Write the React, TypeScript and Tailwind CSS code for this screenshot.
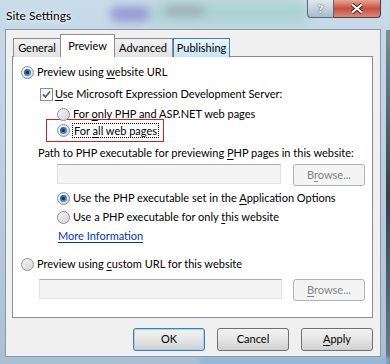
import React from "react";

const font = { fontFamily: 'Lato, "Liberation Sans", Arial, sans-serif' };

function Radio({ checked }: { checked?: boolean }) {
  return (
    <span className="flex h-[13px] w-[13px] shrink-0 items-center justify-center rounded-full border border-[#8e8f8f] bg-gradient-to-br from-[#f6f6f6] to-[#d4d4d4]">
      {checked && (
        <span className="flex h-[7px] w-[7px] items-center justify-center rounded-full bg-gradient-to-br from-[#1b4d7e] to-[#62a8dc]">
          <span className="h-[3px] w-[3px] rounded-full bg-[#0d2f55]" />
        </span>
      )}
    </span>
  );
}

function Check() {
  return (
    <span className="flex h-[13px] w-[13px] shrink-0 items-center justify-center border border-[#8e8f8f] bg-gradient-to-br from-[#f2f2f2] to-[#ffffff]">
      <svg width="9" height="9" viewBox="0 0 9 9">
        <path d="M1 4.5 L3.5 7 L8 1.5" fill="none" stroke="#4a5f97" strokeWidth="1.8" />
      </svg>
    </span>
  );
}

function U({ children }: { children: React.ReactNode }) {
  return <span className="underline underline-offset-2">{children}</span>;
}

function Browse({ accel }: { accel: "B" | "r" }) {
  return (
    <div className="flex h-[22px] w-[72px] shrink-0 items-center justify-center rounded-[3px] border border-[#adb2b5] bg-[#f4f4f4] text-[#838383]">
      {accel === "B" ? (
        <span>
          <U>B</U>rowse...
        </span>
      ) : (
        <span>
          B<U>r</U>owse...
        </span>
      )}
    </div>
  );
}

function Field({ width }: { width: string }) {
  return (
    <div
      className={`h-[20px] ${width} shrink-0 border border-[#e2e3ea] border-t-[#abadb3] bg-[#f4f4f4]`}
    />
  );
}

function DlgButton({ children, focus }: { children: React.ReactNode; focus?: boolean }) {
  return (
    <div
      className={`flex h-[23px] w-[72px] items-center justify-center rounded-[3px] border ${
        focus ? "border-[#3c7fb1] shadow-[inset_0_0_0_1px_#9fd4f5]" : "border-[#707070]"
      } bg-gradient-to-b from-[#f2f2f2] via-[#e6e6e6] to-[#d0d0d0] text-black`}
    >
      {children}
    </div>
  );
}

export default function App() {
  return (
    <div
      className="relative h-[364px] w-[390px] overflow-hidden whitespace-nowrap bg-gradient-to-b from-[#c7dbe8] via-[#b9cfe0] to-[#a9bfd3] text-[11px] text-black"
      style={font}
    >
      {/* blurred glass behind the frame */}
      <div className="absolute left-[150px] top-[2px] h-[22px] w-[160px] rounded-full bg-[#9fd0c8] opacity-70 blur-[6px]" />
      <div className="absolute left-[110px] top-[6px] h-[16px] w-[40px] rounded-full bg-[#8e8fd2] opacity-80 blur-[4px]" />
      <div className="absolute left-[165px] top-[6px] h-[10px] w-[40px] rounded-full bg-[#9b9fa8] opacity-70 blur-[4px]" />
      <div className="absolute right-0 top-[30px] h-[334px] w-[4px] bg-gradient-to-b from-[#7c8c98] via-[#3a4048] to-[#6d7d8c]" />
      <div className="absolute bottom-0 left-[200px] h-[6px] w-[190px] bg-[#8fb6d6] blur-[2px]" />

      {/* title bar */}
      <div className="relative flex h-[29px] items-start">
        <div className="pl-[6px] pt-[7px] text-[12px] text-black [text-shadow:0_0_6px_#ffffff,0_0_3px_#ffffff]">
          Site Settings
        </div>
        <div className="ml-auto mr-[9px] flex h-[18px]">
          <div className="flex w-[27px] items-center justify-center rounded-bl-[4px] border border-t-0 border-[#5a6a78] bg-gradient-to-b from-[#dfe8ee] to-[#a9bcc8] text-[12px] font-bold text-white [text-shadow:0_0_2px_#333]">
            ?
          </div>
          <div className="flex w-[47px] items-center justify-center rounded-br-[4px] border border-l-0 border-t-0 border-[#5a3a36] bg-gradient-to-b from-[#e8a493] via-[#c74f3f] to-[#d8887a]">
            <svg width="14" height="11" viewBox="0 0 14 11">
              <path d="M2 1.5 L12 9.5 M12 1.5 L2 9.5" stroke="#3b2a28" strokeWidth="4" />
              <path d="M2 1.5 L12 9.5 M12 1.5 L2 9.5" stroke="#ffffff" strokeWidth="2.2" />
            </svg>
          </div>
        </div>
      </div>

      {/* client area */}
      <div className="relative ml-[5px] h-[328px] w-[376px] border border-[#8a98a6] bg-[#f0f0f0] px-[6px] pt-[4px]">
        {/* tabs */}
        <div className="flex h-[23px] items-end pl-[1px]">
          <div className="flex h-[19px] w-[48px] items-center justify-center border border-b-0 border-[#898c95] bg-gradient-to-b from-[#f2f2f2] to-[#e3e3e3]">
            General
          </div>
          <div className="relative z-10 -mx-[1px] flex h-[23px] w-[55px] items-start justify-center border border-b-0 border-[#898c95] bg-white pt-[3px]">
            Preview
          </div>
          <div className="flex h-[19px] w-[59px] items-center justify-center border border-b-0 border-l-0 border-[#898c95] bg-gradient-to-b from-[#f2f2f2] to-[#e3e3e3]">
            Advanced
          </div>
          <div className="flex h-[19px] w-[57px] items-center justify-center border border-b-0 border-[#3c7fb1] bg-gradient-to-b from-[#eaf6fd] to-[#c4e5f6]">
            Publishing
          </div>
        </div>

        {/* panel */}
        <div className="-mt-[1px] h-[262px] w-[361px] border border-[#898c95] bg-white pl-[8px] pt-[8px]">
          <div className="flex h-[14px] items-center gap-[3px]">
            <Radio checked />
            <span>
              Preview using <U>w</U>ebsite URL
            </span>
          </div>

          <div className="ml-[19px] mt-[8px] flex h-[14px] items-center gap-[2px]">
            <Check />
            <span>
              <U>U</U>se Microsoft Expression Development Server:
            </span>
          </div>

          <div className="ml-[36px] mt-[6px] flex h-[14px] items-center gap-[3px]">
            <Radio />
            <span>
              For <U>o</U>nly PHP and ASP.NET web pages
            </span>
          </div>

          <div className="-mt-[2px] ml-[25px] flex h-[23px] w-[118px] items-center border border-[#d21f1f] pl-[10px]">
            <Radio checked />
            <span className="ml-[2px] border border-dotted border-black px-[1px] leading-[13px]">
              For <U>a</U>ll web pages
            </span>
          </div>

          <div className="ml-[17px] mt-[4px] flex h-[14px] items-center">
            <span>
              Path to PHP executable for previewing <U>P</U>HP pages in this website:
            </span>
          </div>

          <div className="ml-[36px] mt-[4px] flex items-start gap-[12px]">
            <Field width="w-[224px]" />
            <Browse accel="r" />
          </div>

          <div className="ml-[36px] mt-[5px] flex h-[14px] items-center gap-[3px]">
            <Radio checked />
            <span>
              Use the PHP executable set in the <U>A</U>pplication Options
            </span>
          </div>

          <div className="ml-[36px] mt-[5px] flex h-[14px] items-center gap-[3px]">
            <Radio />
            <span>
              Use a PHP executable for only <U>t</U>his website
            </span>
          </div>

          <div className="ml-[37px] mt-[5px] flex h-[14px] items-center">
            <span className="text-[#0033cc] underline underline-offset-2">More Information</span>
          </div>

          <div className="mt-[14px] flex h-[14px] items-center gap-[3px]">
            <Radio />
            <span>
              Preview using <U>c</U>ustom URL for this website
            </span>
          </div>

          <div className="ml-[18px] mt-[8px] flex items-start gap-[11px]">
            <Field width="w-[243px]" />
            <Browse accel="B" />
          </div>
        </div>

        {/* buttons */}
        <div className="mt-[10px] flex justify-end gap-[12px] pr-[1px]">
          <DlgButton focus>OK</DlgButton>
          <DlgButton>Cancel</DlgButton>
          <DlgButton>
            <span>
              <U>A</U>pply
            </span>
          </DlgButton>
        </div>
      </div>
    </div>
  );
}
